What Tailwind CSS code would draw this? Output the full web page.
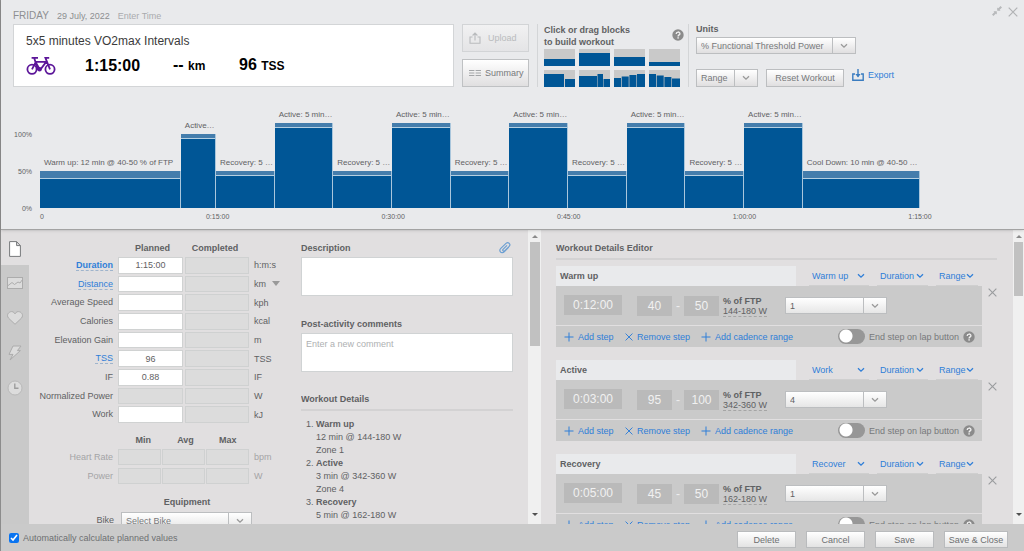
<!DOCTYPE html>
<html lang="en">
<head>
<meta charset="utf-8">
<meta name="viewport" content="width=device-width, initial-scale=1">
<title>5x5 minutes VO2max Intervals</title>
<script src="https://cdn.jsdelivr.net/npm/@tailwindcss/browser@4"></script>
</head>
<body class="h-screen overflow-hidden bg-[#e1dfe0] text-[9px] leading-3 text-[#5f6163] font-['Liberation_Sans',Arial,sans-serif]">
<svg class="hidden" aria-hidden="true">
  <symbol id="chev" viewBox="0 0 8 6"><path d="M1 1.2 L4 4.2 L7 1.2" fill="none" stroke="currentColor" stroke-width="1.3"/></symbol>
  <symbol id="help" viewBox="0 0 12 12"><circle cx="6" cy="6" r="5.7" fill="#8b8b8b"/><path d="M4.2 4.9 C4.2 2.5 7.9 2.5 7.9 4.7 C7.9 6 6.1 5.9 6.1 7.4" fill="none" stroke="#f0f0f0" stroke-width="1.4"/><rect x="5.4" y="8.2" width="1.4" height="1.4" fill="#f0f0f0"/></symbol>
  <symbol id="cross" viewBox="0 0 10 10"><path d="M.7 .7 L9.3 9.3 M9.3 .7 L.7 9.3" fill="none" stroke="currentColor" stroke-width="1.2"/></symbol>
  <symbol id="plus" viewBox="0 0 10 10"><path d="M5 .5 V9.5 M.5 5 H9.5" fill="none" stroke="currentColor" stroke-width="1"/></symbol>
</svg>

<div class="flex h-full flex-col border-l border-[#8c8c8c]">
  <header class="relative z-10 shrink-0 border-b border-[#a3a3a3] bg-[#e9eaec] pt-1 pb-1.5 pl-3 shadow">
    <div class="flex h-5 items-end pr-1.5 text-[#8d8f91]">
      <span class="text-[10px] leading-4">FRIDAY</span>
      <span class="ml-2 leading-4">29 July, 2022</span>
      <button class="ml-2 leading-4 text-[#a9abae]">Enter Time</button>
      <button aria-label="Shrink" class="ml-auto flex h-3.5 items-center self-start text-[#b7b9bb]">
        <svg class="size-2.5" viewBox="0 0 10 10"><path d="M5.2 4.8 V1.4 L8.6 4.8 Z M4.8 5.2 V8.6 L1.4 5.2 Z" fill="currentColor"/><path d="M6.2 3.8 L9.3 .7 M3.8 6.2 L.7 9.3" stroke="currentColor" stroke-width="2"/></svg>
      </button>
      <button aria-label="Close" class="ml-1.5 flex h-4 items-center self-start text-[#b0b2b4]"><svg class="size-[10px]"><use href="#cross"/></svg></button>
    </div>

    <div class="flex">
      <section class="h-[63px] w-[441px] border border-[#d3d5d7] bg-white pl-3 text-black">
        <h1 class="pt-2 text-[12px] leading-4 text-[#3b3b3b]">5x5 minutes VO2max Intervals</h1>
        <div class="mt-1.5 flex items-center font-bold">
          <svg class="w-[30px] h-5" viewBox="0 0 30 20" fill="none" stroke="#5c1699" stroke-width="1.8"><circle cx="6" cy="13.3" r="4.6"/><circle cx="24" cy="13.3" r="4.6"/><path d="M6 13.3 L9.8 5.8 H20.2 L14.6 13.3 H11.8 L8.2 2 M5.6 1.8 H12 M24 13.3 L19.4 1.8 H23.2 M9.5 6 L13.5 13"/><circle cx="13.6" cy="13.3" r="1.3" fill="#5c1699"/></svg>
          <span class="ml-[29px] w-[88px] text-[16px] leading-5">1:15:00</span>
          <span class="w-[66px] text-[16px] leading-5">-- <small class="text-[12px]">km</small></span>
          <span class="text-[16px] leading-5">96 <small class="text-[12px]">TSS</small></span>
        </div>
      </section>

      <div class="ml-2 flex w-[67px] flex-col justify-between">
        <button disabled class="flex h-7 items-center gap-[7px] border border-[#d2d4d6] bg-linear-to-b from-[#f1f1f2] to-[#e4e4e6] pl-1.5 text-[#b9bbbd]">
          <svg class="size-3" viewBox="0 0 12 12" fill="none" stroke="currentColor" stroke-width="1.1"><path d="M3.5 5 H1 V11.3 H11 V5 H8.5 M6 8.5 V1.2 M3.6 3.5 L6 1 L8.4 3.5"/></svg>Upload</button>
        <button class="flex h-7 items-center gap-1 border border-[#bfc1c3] bg-linear-to-b from-white to-[#e0dfe0] pl-1.5 text-[#77797b]">
          <svg class="h-2 w-3" viewBox="0 0 12 8" stroke="#a4a6a8" stroke-width="1"><path d="M0 1.5 H5.4 M6.6 1.5 H12 M0 4 H5.4 M6.6 4 H12 M0 6.5 H5.4 M6.6 6.5 H12"/></svg>Summary</button>
      </div>

      <section class="ml-2 w-[152px] border-x border-[#d3d5d7] pl-1.5">
        <div class="flex h-[25px] justify-between pr-1">
          <h2 class="font-bold leading-3 whitespace-nowrap">Click or drag blocks<br>to build workout</h2>
          <button aria-label="Help" class="-mt-1"><svg class="size-3"><use href="#help"/></svg></button>
        </div>
        <div class="grid w-[136px] grid-cols-4 gap-1" id="blocks"></div>
      </section>

      <section class="ml-[7px] flex flex-1 flex-col">
        <h2 class="leading-[10px] font-bold">Units</h2>
        <div class="mt-[3px] flex h-[17px] w-40 border border-[#bcbec0] bg-linear-to-b from-white to-[#e0dfe0]">
          <select aria-label="Units" class="min-w-0 flex-1 appearance-none border-r border-[#bcbec0] pl-1 text-[#77797b]"><option>% Functional Threshold Power</option></select>
          <span class="flex w-[22px] items-center justify-center text-[#999]"><svg class="h-1.5 w-2"><use href="#chev"/></svg></span>
        </div>
        <div class="mt-auto flex items-start gap-2">
          <div class="flex h-[18px] w-[62px] border border-[#bcbec0] bg-linear-to-b from-white to-[#e0dfe0]">
            <select aria-label="Target" class="min-w-0 flex-1 appearance-none border-r border-[#bcbec0] pl-1 text-[#77797b]"><option>Range</option></select>
            <span class="flex w-[22px] items-center justify-center text-[#999]"><svg class="h-1.5 w-2"><use href="#chev"/></svg></span>
          </div>
          <button class="h-[18px] w-[78px] border border-[#bcbec0] bg-linear-to-b from-white to-[#e0dfe0] text-[#77797b]">Reset Workout</button>
          <button class="flex items-center gap-1 text-[#2f7ed8]"><svg class="size-3" viewBox="0 0 12 12" fill="none" stroke="#3a7cc0" stroke-width="1.4"><path d="M3 5 H.8 V11.2 H11.2 V5 H9 M6 0 V7.5"/><path d="M3.4 5 H8.6 L6 8.4 Z" fill="#3a7cc0" stroke="none"/></svg>Export</button>
        </div>
      </section>
    </div>

    <section aria-label="Workout chart" class="mt-5 mr-[104px] flex">
      <div class="flex w-[19px] flex-col justify-between self-start pt-[22px] text-right text-[7px]"><span class="h-[37px]">100%</span><span class="h-[37px]">50%</span><span class="h-3">0%</span></div>
      <div class="ml-2 min-w-0 flex-1">
        <div class="flex h-[101px] items-end" id="chart"></div>
        <div class="mt-[3px] flex justify-between pl-0.5 text-[7px]">
          <span class="flex w-0 justify-center">0</span><span class="flex w-0 justify-center">0:15:00</span><span class="flex w-0 justify-center">0:30:00</span><span class="flex w-0 justify-center">0:45:00</span><span class="flex w-0 justify-center">1:00:00</span><span class="flex w-0 justify-center">1:15:00</span>
        </div>
      </div>
    </section>
  </header>

  <main class="flex min-h-0 flex-1">
    <nav class="flex w-7 shrink-0 flex-col bg-[#c9c9c9] text-[#acacac]">
      <button aria-label="Summary" class="flex h-[35px] items-center justify-center bg-[#e1dfe0] pt-0.5"><svg class="h-4 w-3" viewBox="0 0 12 16"><path d="M.6 .6 H7.6 L11.4 4.6 V15.4 H.6 Z M7.6 .6 V4.6 H11.4" fill="#fff" stroke="#77797b" stroke-width="1"/></svg></button>
      <button aria-label="Graph" class="flex h-[35px] items-center justify-center"><svg class="h-3 w-4" viewBox="0 0 16 12" fill="#dcdcdc" stroke="currentColor"><rect x=".5" y=".5" width="15" height="11"/><path d="M.5 9 L5 5.5 L7.5 7.5 L11 5 L13 6 L15.5 2.5" fill="none"/></svg></button>
      <button aria-label="Heart rate" class="flex h-[35px] items-center justify-center"><svg class="h-3.5 w-4" viewBox="0 0 16 14" fill="#dcdcdc" stroke="currentColor"><path d="M8 13.3 L1.6 7.2 C-1.2 3.8 2 .6 4.6 .6 C6.6 .6 7.6 2 8 3 C8.4 2 9.4 .6 11.4 .6 C14 .6 17.2 3.8 14.4 7.2 Z"/></svg></button>
      <button aria-label="Power" class="flex h-[35px] items-center justify-center"><svg class="size-4" viewBox="0 0 16 16" fill="#dcdcdc" stroke="currentColor"><path d="M6 1 H14 L10.4 5.6 H13.4 L3 15 L6 9.4 H2 Z"/></svg></button>
      <button aria-label="Time" class="flex h-[35px] items-center justify-center"><svg class="size-4" viewBox="0 0 16 16"><circle cx="8" cy="8" r="7" fill="#dcdcdc" stroke="#b9b9b9"/><path d="M7.8 3.5 V8.3 H11.5" fill="none" stroke="#9d9d9d" stroke-width="1.4"/></svg></button>
    </nav>

    <div class="w-[223px] shrink-0 overflow-hidden pt-2.5">
      <div class="mb-px ml-[89px] flex gap-0.5 text-center font-bold leading-4"><span class="w-[65px] pl-1">Planned</span><span class="w-[60px]">Completed</span></div>
      <div class="grid h-[166px] grid-cols-[84px_65px_64px] grid-rows-9 gap-x-0.5 gap-y-0.5" id="metrics"></div>
      <div class="mt-[11px] ml-[89px] grid w-[131px] grid-cols-3 pl-1 text-center font-bold leading-3"><span>Min</span><span>Avg</span><span>Max</span></div>
      <div class="mt-[3px] grid gap-[3px] text-[#a4a4a6]" id="extremes"></div>
      <h2 class="mt-3 ml-[89px] w-[138px] text-center font-bold leading-3">Equipment</h2>
      <div class="mt-1 flex h-[17px] justify-end">
        <label for="bike" class="mr-[7px] leading-[17px]">Bike</label>
        <div class="flex w-[131px] border border-[#bcbec0] bg-linear-to-b from-white to-[#e6e6e6]">
          <select id="bike" class="min-w-0 flex-1 appearance-none border-r border-[#bcbec0] pl-1 text-[#77797b]"><option>Select Bike</option></select>
          <span class="flex w-[22px] items-center justify-center text-[#999]"><svg class="h-1.5 w-2"><use href="#chev"/></svg></span>
        </div>
      </div>
    </div>
    <div class="w-[49px] shrink-0 overflow-hidden pt-[27px] pl-[2px]">
      <div class="grid h-[166px] grid-rows-9 gap-y-0.5" id="units"></div>
      <div class="mt-[26px] grid gap-[3px] leading-4 text-[#a4a4a6]"><span>bpm</span><span>W</span></div>
    </div>

    <div class="w-[212px] shrink-0 overflow-hidden pt-2.5">
      <div class="flex h-4 items-center justify-between"><label for="desc" class="font-bold">Description</label>
        <button aria-label="Attach file" class="mr-0.5"><svg class="size-3" viewBox="0 0 12 12" fill="none" stroke="#6c9fd2" stroke-width="1.2"><path d="M9.8 5 L5.2 9.8 C4 11 2.2 10.8 1.4 9.8 C.6 8.8 .8 7.4 1.8 6.4 L7 1.4 C8 .5 9.4 .6 10.2 1.4 C11 2.2 11 3.5 10.2 4.3 L5.6 8.9 C4.6 9.8 3 8.4 4 7.4 L8 3.4"/></svg></button></div>
      <textarea id="desc" class="mt-px block h-[39px] w-full resize-none border border-[#d0d3d4] bg-white"></textarea>
      <label for="post" class="mt-5 block font-bold leading-4">Post-activity comments</label>
      <textarea id="post" placeholder="Enter a new comment" class="mt-px block h-[39px] w-full resize-none border border-[#d0d3d4] bg-white px-1 py-1 placeholder:text-[#aeb0b2]"></textarea>
      <h2 class="mt-[19px] border-b-2 border-[#d3d2d3] pb-0.5 font-bold leading-4">Workout Details</h2>
      <ol class="mt-[7px] list-decimal pl-[15px] leading-[13px]">
        <li><b>Warm up</b><br>12 min @ 144-180 W<br>Zone 1</li>
        <li><b>Active</b><br>3 min @ 342-360 W<br>Zone 4</li>
        <li><b>Recovery</b><br>5 min @ 162-180 W<br>Zone 1</li>
      </ol>
    </div>
    <div class="ml-[15px] flex w-[13px] shrink-0 flex-col items-center bg-[#f0f0f0] py-1">
      <span class="mt-px border-x-3 border-b-3 border-x-transparent border-b-[#8a8a8a]"></span>
      <span class="mt-1 h-[104px] w-2.5 bg-[#c1c1c1]"></span>
      <span class="mt-auto mb-1 border-x-3 border-t-3 border-x-transparent border-t-[#505050]"></span>
    </div>

    <div class="min-w-0 flex-1 overflow-hidden pt-2.5 pl-[15px]">
      <h2 class="mr-4 border-b-2 border-[#d3d2d3] pb-0.5 font-bold leading-4">Workout Details Editor</h2>
      <div class="mt-1.5 grid gap-[13px]" id="steps"></div>
    </div>
    <div class="flex w-[11px] shrink-0 flex-col items-center bg-[#f0f0f0] py-1">
      <span class="mt-px border-x-3 border-b-3 border-x-transparent border-b-[#8a8a8a]"></span>
      <span class="mt-1 h-[54px] w-[9px] bg-[#c1c1c1]"></span>
      <span class="mt-auto mb-1 border-x-3 border-t-3 border-x-transparent border-t-[#505050]"></span>
    </div>
  </main>

  <footer class="flex h-[27px] shrink-0 items-center bg-[#cacaca] pr-4 pl-2 text-[#6d6f71]">
    <label class="flex items-center gap-1"><input type="checkbox" checked class="size-2.5 accent-[#0a74f0]">Automatically calculate planned values</label>
    <div class="ml-auto flex gap-2.5 pt-1" id="actions"></div>
  </footer>
</div>

<script>
const fill = (id, items, view) => { document.getElementById(id).innerHTML = items.map(view).join(''); };

// Each block: x, y, width of its bars inside a 31x17 tile
fill('blocks', [
  [[0,10,31]], [[0,4,31]], [[0,8,31]], [[0,13,31]],
  [[0,4,20],[21,9,10]], [[0,6,18],[18.5,4,5.5],[24.5,9,6.5]],
  [[0,8,7],[7.7,6.5,7],[15.4,5,7],[23,4,8]], [[0,4,7],[7.7,5.5,7],[15.4,7,7],[23,8.5,8]]
], (b) => `<button aria-label="Workout block"><svg class="h-[17px] w-[31px] bg-[#c9c9c9]" viewBox="0 0 31 17">${b.map(r => `<rect x="${r[0]}" y="${r[1]}" width="${r[2]}" height="${17 - r[1]}" fill="#005696"/>`).join('')}</svg></button>`);

// Chart intervals: label, minutes, upper target, lower target (% of FTP)
const rec = ['Recovery: 5 …', 5, 50, 45], act = ['Active: 5 min…', 5, 115, 110];
fill('chart', [['Warm up: 12 min @ 40-50 % of FTP', 12, 50, 40], ['Active…', 3, 100, 95], rec, act, rec, act, rec, act, rec, act, rec, act, ['Cool Down: 10 min @ 40-50 …', 10, 50, 40]],
  (s) => `<div class="min-w-0 basis-0" style="flex-grow:${s[1]}"><div class="pb-0.5 pl-1 text-[8px] whitespace-nowrap">${s[0]}</div><div class="flex flex-col border-r border-[#a9c6dc] bg-[#447dac]" style="height:${Math.round(s[2] * 0.74)}px"><div class="mt-auto border-t border-[#b5cfe1] bg-[#005696]" style="height:${Math.round(s[3] * 0.74)}px"></div></div></div>`);

fill('metrics', [['Duration','1:15:00','b'],['Distance','','l'],['Average Speed',''],['Calories',''],['Elevation Gain',''],['TSS','96','l'],['IF','0.88'],['Normalized Power',null],['Work','']],
  ([n, v, k], i) => `<label for="m${i}" class="text-right leading-4">${k ? `<a href="#" class="${k === 'b' ? 'border-b border-dashed border-[#9fb4cc] font-bold text-[#2f7ed8]' : 'border-b border-dashed border-[#9fb4cc] text-[#2f7ed8]'}">${n}</a>` : n}</label><input id="m${i}" value="${v || ''}" ${v === null ? 'disabled' : ''} class="ml-[3px] h-full w-[65px] border border-[#d0d2d2] bg-white text-center disabled:bg-[#dcdcdc]"><input aria-label="${n} completed" disabled class="ml-[3px] h-full w-[64px] border border-[#cfd1d1] bg-[#dcdcdc]">`);
fill('units', ['h:m:s','km','kph','kcal','m','TSS','IF','W','kJ'], (u) => `<span class="flex items-center gap-1.5">${u}${u === 'km' ? '<span class="border-x-4 border-t-5 border-x-transparent border-t-[#999]"></span>' : ''}</span>`);
fill('extremes', ['Heart Rate','Power'], (n) => `<div class="flex h-4 items-center gap-px"><span class="mr-1 w-[84px] text-right">${n}</span>${['min','avg','max'].map(x => `<input aria-label="${n} ${x}" disabled class="h-4 w-[43px] border border-[#cfd1d1] bg-[#dcdcdc]">`).join('')}</div>`);

const pick = (v, w) => `<span class="${w} flex h-5 items-center justify-between border-b border-[#cfcfcf] pr-1"><select aria-label="${v}" class="min-w-0 flex-1 appearance-none pl-[3px]"><option>${v}</option></select><svg class="h-1.5 w-2"><use href="#chev"/></svg></span>`;
fill('steps', [['Warm up','Warm up','0:12:00',40,50,'144-180 W','1'],['Active','Work','0:03:00',95,100,'342-360 W','4'],['Recovery','Recover','0:05:00',45,50,'162-180 W','1']],
  (s) => `<article class="flex"><div class="min-w-0 flex-1">
    <div class="flex"><h3 class="mr-[13px] flex h-5 flex-1 items-center bg-[#e9eaec] pl-1 font-bold">${s[0]}</h3><div class="flex gap-2 pr-1 text-[#2f7ed8]">${pick(s[1],'w-[60px]')}${pick('Duration','w-[51px]')}${pick('Range','w-[42px]')}</div></div>
    <div class="flex h-[39px] items-center bg-[#cacaca] pl-2">
      <input aria-label="Duration" value="${s[2]}" class="-mt-0.5 h-5 w-[58px] bg-[#bababa] text-center text-[12px] text-[#f1f1f1]">
      <input aria-label="From" value="${s[3]}" class="ml-[15px] h-5 w-[35px] bg-[#bababa] text-center text-[12px] text-[#f1f1f1]">
      <span class="w-3 text-center text-[12px] text-[#eee]">-</span>
      <input aria-label="To" value="${s[4]}" class="h-5 w-[35px] bg-[#bababa] text-center text-[12px] text-[#f1f1f1]">
      <div class="ml-1 w-[62px] whitespace-nowrap leading-[10px]"><b>% of FTP</b><br><span class="border-b border-dashed border-[#a5a5a5]">${s[5]}</span></div>
      <div class="flex h-[17px] w-[102px] border border-[#bcbec0] bg-linear-to-b from-white to-[#e6e6e6]"><select aria-label="Zone" class="min-w-0 flex-1 appearance-none border-r border-[#bcbec0] pl-1"><option>${s[6]}</option></select><span class="flex w-[22px] items-center justify-center text-[#999]"><svg class="h-1.5 w-2"><use href="#chev"/></svg></span></div>
    </div>
    <div class="flex h-[22px] items-center border-t border-[#e1dfe0] bg-[#cacaca] pr-[7px] pl-2 text-[#2f7ed8]">
      <button class="flex w-[61px] items-center gap-1 whitespace-nowrap"><svg class="size-2.5"><use href="#plus"/></svg>Add step</button>
      <button class="flex w-[76px] items-center gap-1 whitespace-nowrap"><svg class="size-2"><use href="#cross"/></svg>Remove step</button>
      <button class="flex items-center gap-1 whitespace-nowrap"><svg class="size-2.5"><use href="#plus"/></svg>Add cadence range</button>
      <label class="ml-auto flex w-[125px] items-center gap-1 whitespace-nowrap text-[#77797b]"><input type="checkbox" role="switch" class="h-[15px] w-[27px] appearance-none rounded-full bg-[#979797] bg-[radial-gradient(circle_at_8px_7px,#fff_6px,transparent_7px)]">End step on lap button</label>
      <button aria-label="Help"><svg class="size-3"><use href="#help"/></svg></button>
    </div></div>
    <button aria-label="Delete step" class="mt-[22px] mr-4 ml-1.5 self-start text-[#9a9c9e]"><svg class="size-[9px]"><use href="#cross"/></svg></button></article>`);

fill('actions', ['Delete','Cancel','Save','Save & Close'], (a) => `<button class="h-[17px] w-[59px] border border-[#b9bbbd] bg-linear-to-b from-white to-[#e3e3e3] whitespace-nowrap last:w-[64px]">${a}</button>`);
</script>
</body>
</html>
